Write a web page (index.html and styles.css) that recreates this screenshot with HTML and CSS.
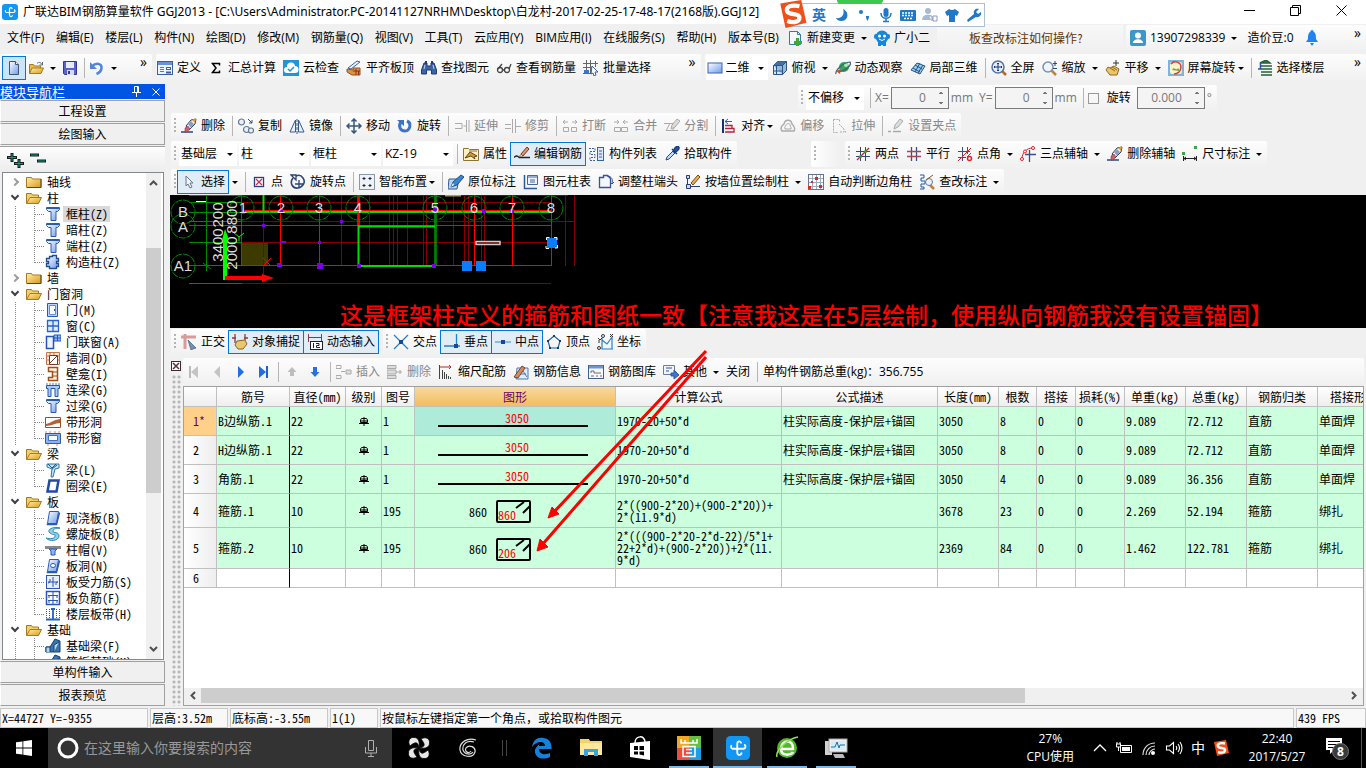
FILE: index.html
```html
<!DOCTYPE html>
<html lang="zh-CN">
<head>
<meta charset="utf-8">
<title>广联达BIM钢筋算量软件 GGJ2013</title>
<link rel="stylesheet" href="styles.css">
</head>
<body>
<svg class="defs" aria-hidden="true">
<defs>
<linearGradient id="gBlue" x1="0" y1="0" x2="1" y2="1"><stop offset="0" stop-color="#fff"/><stop offset="1" stop-color="#6d9cf0"/></linearGradient>
<linearGradient id="gGold" x1="0" y1="0" x2="1" y2="1"><stop offset="0" stop-color="#fff0a8"/><stop offset="1" stop-color="#d99a1c"/></linearGradient>
<symbol id="app" viewBox="0 0 16 16"><rect width="16" height="16" rx="3" fill="#1296f3"/><path d="M10 4.500C9.500 3 7.500 3.500 7.500 5v6c0 2 2.500 2 2.800.5M3.500 6.500C3 8 4 8.500 5 8.500h6.500C13 8.500 13.500 7 12.500 6" fill="none" stroke="#fff" stroke-width="1.200" stroke-linecap="round"/></symbol>
<symbol id="new" viewBox="0 0 16 16"><path d="M3.500 1.500h6l3 3v10h-9z" fill="url(#gBlue)" stroke="#44546c"/><path d="M9.500 1.500v3h3" fill="#fff" stroke="#44546c"/></symbol>
<symbol id="open" viewBox="0 0 16 16"><path d="M1.500 13.500v-9h4l1 1.500h6v2" fill="#e9bd4d" stroke="#a87a1c"/><path d="M1.500 13.500L4 8h11.500L13 13.500z" fill="url(#gGold)" stroke="#a87a1c"/><path d="M9 3.500c2-2 4-1 5 1M14.500 2v3h-3" fill="none" stroke="#5d6b82"/></symbol>
<symbol id="save" viewBox="0 0 16 16"><path d="M1.500 1.500h13v13h-12l-1-1z" fill="#5b62c8" stroke="#34388e"/><rect x="4" y="2" width="8" height="6" fill="#e7ebff"/><rect x="5" y="10" width="7" height="5" fill="#d6daf4"/><rect x="6" y="11" width="2" height="3" fill="#34388e"/></symbol>
<symbol id="undo" viewBox="0 0 16 16"><path d="M3 6.500C7 2 13 3.500 12.500 8c-.3 3-2.500 5-5 6" fill="none" stroke="#5485dd" stroke-width="2.500"/><path d="M1 2v7h7z" fill="#5485dd"/></symbol>
<symbol id="define" viewBox="0 0 16 16"><rect x=".5" y="1.500" width="15" height="13" fill="#eef4ff" stroke="#3b5f9f"/><rect x="1" y="2" width="14" height="3" fill="#6993d8"/><path d="M3 7.500h4M3 9.500h4M3 11.500h4" stroke="#777"/><rect x="9.500" y="7.500" width="4" height="2" fill="#fff" stroke="#3b5f9f"/><path d="M9 12.500h5" stroke="#3b5f9f" stroke-width="2"/></symbol>
<symbol id="sigma" viewBox="0 0 16 16"><path d="M11.500 5.500V3.500h-7L8 8l-3.500 4.500h7v-2" fill="none" stroke="#000" stroke-width="1.500"/></symbol>
<symbol id="cloud" viewBox="0 0 16 16"><rect width="16" height="16" fill="#1e96d8"/><path d="M4 13a3 3 0 0 1 0-6 4 4 0 0 1 8-1 3.500 3.500 0 0 1 0 7z" fill="#fff"/><path d="M5 9l2 2 4-4" fill="none" stroke="#1e96d8" stroke-width="1.500"/></symbol>
<symbol id="flat" viewBox="0 0 16 16"><path d="M2 8l9-7 3 1-9 7z" fill="#e6effc" stroke="#3c64a8"/><path d="M1 9l6 1v-2h7v7H6l-5-3z" fill="#dd9440" stroke="#98501c"/><path d="M7 11h7M10 9v6M12.500 11v4" stroke="#8e2e1c"/></symbol>
<symbol id="bino" viewBox="0 0 16 16"><path d="M3 3h3v3h4V3h3l2.500 7v4h-5v-4h-5v4h-5v-4z" fill="#3d64a4" stroke="#203d70"/><path d="M4 1h2v3H4zM10 1h2v3h-2z" fill="#203d70"/><path d="M3 9l1-4M12 5l1 4" stroke="#c2d6f6"/></symbol>
<symbol id="glasses" viewBox="0 0 16 16"><g fill="#fff" stroke="#444" stroke-width="1.300"><circle cx="4" cy="10" r="2.500"/><circle cx="11" cy="10" r="2.500"/><path d="M6.500 10h2M2 9l4-5M13 9l2-5" fill="none"/></g></symbol>
<symbol id="batch" viewBox="0 0 16 16"><path d="M3.500 0v14M7.500 0v14M0 3.500h15M0 7.500h9M0 13.500h8M12.500 1v6" stroke="#666"/><path d="M1 10h5v3H1z" fill="#3e74cf"/><path d="M9 6l6 6h-3l1 3-2 1-1-3-2 1z" fill="#fff" stroke="#3b5e92"/></symbol>
<symbol id="two" viewBox="0 0 16 16"><rect x="1" y="3" width="14" height="10" fill="url(#gBlue)" stroke="#3f63b2"/></symbol>
<symbol id="cube" viewBox="0 0 16 16"><path d="M1.500 5.500l4-4h9v9l-4 4h-9z" fill="#cfe5fa" stroke="#2c5486"/><path d="M1.500 5.500l4-4h9l-4 4z" fill="#45709d"/><path d="M10.500 5.500l4-4v9l-4 4zM1.500 5.500h9v9M4.500 6v8M2 11h8" fill="#6b9bc7" fill-opacity=".6" stroke="#2c5486"/></symbol>
<symbol id="orbit" viewBox="0 0 16 16"><circle cx="9" cy="7" r="5" fill="#35a55b"/><circle cx="11" cy="5" r="2" fill="#a9efb5"/><path d="M1 14c-1-3 6-11 14-12 2 3-4 9-12 10" fill="none" stroke="#3f6074" stroke-width="1.200"/><path d="M1 11l5-2-1 5z" fill="#d54b28"/></symbol>
<symbol id="local" viewBox="0 0 16 16"><path d="M1 10l6-7 8 3-5 8z" fill="#9bc9ec" stroke="#245887"/><path d="M5 5l7 4M3 8l7 4M10 3l-5 9M13 5l-5 8" stroke="#245887"/></symbol>
<symbol id="full" viewBox="0 0 16 16"><path d="M11 11l4 4" stroke="#b56d28" stroke-width="2.500"/><circle cx="7" cy="7" r="6" fill="#e3efff" stroke="#5b7198" stroke-width="1.500"/><path d="M7 3v8M3 7h8M6 4l1-1 1 1M6 10l1 1 1-1M4 6L3 7l1 1M10 6l1 1-1 1" fill="none" stroke="#1b377b"/></symbol>
<symbol id="zoomi" viewBox="0 0 16 16"><path d="M9 10l5 5" stroke="#bf8240" stroke-width="2.500"/><circle cx="6" cy="7" r="5" fill="#eef6ff" stroke="#7c90ac" stroke-width="1.500"/><path d="M13 1v5M11 3.500h4M11 8.500h4" stroke="#26487f"/></symbol>
<symbol id="pan" viewBox="0 0 16 16"><path d="M1 10l2-3 2 1 4-2 5 3-2 6H5z" fill="#ecc36b" stroke="#94691e"/><path d="M5 8l5 3M7 7l5 3" stroke="#94691e"/><path d="M11 0v6M8 3h6" stroke="#333"/></symbol>
<symbol id="rot3" viewBox="0 0 16 16"><rect width="16" height="16" fill="#7db4dc"/><rect x="2" y="2" width="12" height="12" rx="2" fill="#fbf3cf"/><path d="M3 4c3-4 10-2 10 3s-4 7-7 7" fill="none" stroke="#dc3d31" stroke-width="1.500"/><path d="M4 10c2-4 3 0 5-1s3 0 2 2z" fill="#6cae47"/></symbol>
<symbol id="floor" viewBox="0 0 16 16"><path d="M3 3h10l-4-3zM4 6h11M4 9h11M4 12h11M4 15h11" fill="#3a7c41" stroke="#23613d" stroke-width="1.400"/><path d="M3.500 3v6H1" stroke="#2b539c" fill="none" stroke-width="1.500"/></symbol>
<symbol id="erase" viewBox="0 0 16 16"><path d="M0 14h12" stroke="#2a4a80" stroke-width="1.500"/><path d="M5 8l5-6 5-1-1 5-6 6z" fill="#f6f6f6" stroke="#2b3c5c"/><path d="M7 6l3-3 3 3-3 4z" fill="#8b9dc0"/><path d="M11 2l4-2-1 5z" fill="#e59c2f"/><path d="M4 10l3-2 2 3-3 3H4z" fill="#d65b68" stroke="#633" stroke-width=".5"/></symbol>
<symbol id="copy" viewBox="0 0 16 16"><g fill="#eaf0f8" stroke="#637990" stroke-width="1.200"><circle cx="3.500" cy="4" r="3"/><circle cx="8.500" cy="11.500" r="3"/><circle cx="13" cy="12.500" r="2.500"/></g><path d="M10 1l4 4M14 2v3h-3" fill="none" stroke="#2a4c93"/></symbol>
<symbol id="mirror" viewBox="0 0 16 16"><path d="M6.500 2v12H1zM9.500 2v12H15z" fill="#e8f1ff" stroke="#385890"/><path d="M8 1v15" stroke="#385890" stroke-dasharray="3 1"/></symbol>
<symbol id="move" viewBox="0 0 16 16"><path d="M8 1v14M1 8h14M5.500 3.500L8 1l2.500 2.500M5.500 12.500L8 15l2.500-2.500M3.500 5.500L1 8l2.500 2.500M12.500 5.500L15 8l-2.500 2.500" fill="none" stroke="#39567c" stroke-width="1.500"/></symbol>
<symbol id="rotate" viewBox="0 0 16 16"><path d="M10 3c5 2 3 10-2 10S1 8 4 4" fill="none" stroke="#3d72cb" stroke-width="3"/><path d="M0 2h7v6z" fill="#3d72cb"/></symbol>
<symbol id="extend" viewBox="0 0 16 16"><path d="M1 5.500h7v5H1M9.500 8H13M12.500 2v12M15 2v12" fill="none" stroke="#aaa"/></symbol>
<symbol id="trim" viewBox="0 0 16 16"><path d="M0 6.500h6M0 10.500h6M7.500 1v14M10.500 1v14M11 8.500h5" fill="none" stroke="#aaa"/></symbol>
<symbol id="breaki" viewBox="0 0 16 16"><path d="M1 4h5M10 4h5M3 2L1 4l2 2M13 2l2 2-2 2M1.500 9.500h5v4h-5zM9.500 9.500h5v4h-5z" fill="none" stroke="#aaa"/></symbol>
<symbol id="joini" viewBox="0 0 16 16"><path d="M1 4h5M10 4h5M4 2l2 2-2 2M12 2l-2 2 2 2M1.500 9.500h6v4h-6zM8.500 9.500h6v4h-6z" fill="none" stroke="#aaa"/></symbol>
<symbol id="split" viewBox="0 0 16 16"><path d="M0 5.500h10M2 12.500h12M2 13l4-8M8 13l7-10" fill="none" stroke="#aaa"/><path d="M7 11l1-4 5-6 3 2-5 6z" fill="#ddd" stroke="#aaa"/></symbol>
<symbol id="gripset" viewBox="0 0 16 16"><path d="M0 13.500h3M5 13.500h8" stroke="#aaa" stroke-width="1.500"/><path d="M6 11l1-4 5-6 3 2-5 6z" fill="#ddd" stroke="#aaa"/></symbol>
<symbol id="align" viewBox="0 0 16 16"><path d="M2 1v14" stroke="#1a306d" stroke-width="2"/><path d="M4 3.500h7M7 1L4 3.500 7 6" stroke="#2360c3" fill="none"/><path d="M4 7.500h7v3H4M4 14h9v-3.500h-2" fill="none" stroke="#ae263c" stroke-width="1.300"/></symbol>
<symbol id="offset" viewBox="0 0 16 16"><path d="M2 13c-3-4 1-6 2-7 1-5 7-5 8 0 2 2 4 4 2 7z" fill="none" stroke="#aaa" stroke-width="1.400"/><path d="M5 11c-1-3 1-2 1-4 1-2 4-2 4 0s2 2 1 4z" fill="none" stroke="#aaa"/></symbol>
<symbol id="stretch" viewBox="0 0 16 16"><path d="M2.500 1.500h6v3M2.500 1.500v13h4M8 6l5 5v3h-4M14 13l1 1-1 1" fill="none" stroke="#aaa" stroke-dasharray="2 1"/></symbol>
<symbol id="prop" viewBox="0 0 16 16"><path d="M.5 2.500h5l1 1h9v11H.5z" fill="#fff1bf" stroke="#8e7339"/><path d="M2 12l5-6 7 4-3 1 1 2-4-3z" fill="#d49635" stroke="#5d4a23"/><path d="M6 5h8" stroke="#8e7339"/></symbol>
<symbol id="pencil" viewBox="0 0 16 16"><path d="M0 11.500q3-3 5 0h11" fill="none" stroke="#222" stroke-width="1.300"/><path d="M7 8l6-7 2 2-6 7z" fill="#e59362" stroke="#6d3828"/><path d="M5 11l2-3 2 2z" fill="#f7d6a7" stroke="#444" stroke-width=".5"/></symbol>
<symbol id="list" viewBox="0 0 16 16"><path d="M0 2.500h6v3H1v3h5v3H1v3h5" fill="none" stroke="#3763a7" stroke-dasharray="2 1"/><rect x="8.500" y="1.500" width="6" height="13" fill="#dce8fa" stroke="#3763a7"/><path d="M10 5h3M10 8h3M10 11h3" stroke="#3763a7"/></symbol>
<symbol id="pick" viewBox="0 0 16 16"><path d="M2 14l1-3 6-6 2 2-6 6z" fill="#bcdcff" stroke="#2a4b83"/><path d="M8 3l5 5M9 6l2-4c3-4 6 0 2 3l-3 2" fill="#2a57a5" stroke="#173b7b" stroke-width="1.500"/></symbol>
<symbol id="two-pt" viewBox="0 0 16 16"><path d="M1 5.500h14M1 10.500h14M5.500 1v14M10.500 1v14" stroke="#38476e"/><path d="M2 14L14 2" stroke="#bd2424" stroke-width="1.200"/><circle cx="5.500" cy="10.500" r="1.500" fill="#359b34"/><circle cx="10.500" cy="5.500" r="1.500" fill="#359b34"/></symbol>
<symbol id="grid" viewBox="0 0 16 16"><path d="M5.500 1v14M10.500 1v14" stroke="#38508b" stroke-width="1.300"/><path d="M1 5.500h14M1 10.500h14" stroke="#a64554" stroke-width="1.300"/></symbol>
<symbol id="angle" viewBox="0 0 16 16"><path d="M1 5.500h12M1 11.500h8M5.500 1v14M10.500 1v7" stroke="#38508b"/><path d="M1 15L14 2M10 11l4-4" stroke="#d22"/><circle cx="12.500" cy="12.500" r="2" fill="#fff" stroke="#d22" stroke-width="1.500"/></symbol>
<symbol id="three" viewBox="0 0 16 16"><path d="M5 8.500h11M9.500 4v12" stroke="#38508b" stroke-width="1.300"/><path d="M2 13C2 7 6 2 13 2" fill="none" stroke="#d22"/><circle cx="2" cy="13" r="1.500" fill="#fff" stroke="#d22"/><circle cx="5" cy="5.500" r="1.500" fill="#fff" stroke="#d22"/><circle cx="13" cy="2" r="1.500" fill="#fff" stroke="#d22"/></symbol>
<symbol id="dim" viewBox="0 0 16 16"><path d="M1.500 10v5M14.500 10v5M2 12.500h12M4 11l-2 1.500L4 14M12 11l2 1.500-2 1.500" fill="none" stroke="#222"/><path d="M0 6h3v3H0zM12 0h3v3h-3z" fill="#3da64a"/></symbol>
<symbol id="cursor" viewBox="0 0 16 16"><path d="M5 2l7 7H9l2 4-2 1-2-4-2 2z" fill="#eef5ff" stroke="#66798c"/></symbol>
<symbol id="point" viewBox="0 0 16 16"><rect x="3.500" y="3.500" width="9" height="9" fill="#fff" stroke="#283c80" stroke-width="1.300"/><path d="M5 5l6 6M11 5l-6 6" stroke="#c43152" stroke-width="1.300"/></symbol>
<symbol id="rotp" viewBox="0 0 16 16"><path d="M3 4c-4 5 0 11 5 10s8-6 5-10c-2-3-5-3-7-2" fill="none" stroke="#2c4675" stroke-width="1.600"/><path d="M1 1h5v5zM5 10h8M9 6v8" fill="none" stroke="#2c4675" stroke-width="1.300"/></symbol>
<symbol id="smart" viewBox="0 0 16 16"><rect x=".5" y=".5" width="15" height="15" fill="#eef2f6" stroke="#263b56" stroke-dasharray="1 1"/><path d="M5 3v3M3.500 4.500h3M11 3v3M9.500 4.500h3M5 10v3M3.500 11.500h3M11 10v3M9.500 11.500h3" stroke="#17233b"/></symbol>
<symbol id="orig" viewBox="0 0 16 16"><path d="M1 5h10l-2 10H0z" fill="#b8d5f5" stroke="#315785"/><path d="M3 13l2-5 8-7 3 2-7 8z" fill="#3c84d1" stroke="#244e83"/><path d="M3 13l3-2-1-2z" fill="#fff"/></symbol>
<symbol id="coltab" viewBox="0 0 16 16"><path d="M4.500 1.500h10v9h-10z" fill="#edf4ff" stroke="#46679a"/><path d="M5 3h9M7 6h5M7 8h5" stroke="#46679a"/><path d="M1.500 1v13.500H14" fill="none" stroke="#2e5a99" stroke-width="1.500"/></symbol>
<symbol id="adjust" viewBox="0 0 16 16"><path d="M1.500 3.500h4v-2h4l3 3v9h-11z" fill="#f3f7ff" stroke="#3b5390" stroke-width="1.300"/><path d="M9 2c5 0 6 4 5 8M12 8l2 2 2-2" fill="none" stroke="#3b5390"/></symbol>
<symbol id="wallc" viewBox="0 0 16 16"><path d="M1.500 1.500h3v3h-3zM2.500 5v5M1.500 10.500h4v4h-4zM6 12.500h9" fill="#cad9ee" stroke="#263f70"/><path d="M6 9l7-8 2 2-7 8z" fill="#edb14b" stroke="#6d4922"/></symbol>
<symbol id="auto" viewBox="0 0 16 16"><rect x=".5" y=".5" width="15" height="15" fill="#fff" stroke="#637391"/><path d="M4.500 1v14M8.500 1v14M12.500 1v14M1 4.500h14M1 8.500h14M1 12.500h14" stroke="#9caac0"/><path d="M7 3h3v3H7zM11 11h3v3h-3zM0 12h3v3H0zM3 7h2v2H3z" fill="#d42a2a"/></symbol>
<symbol id="check" viewBox="0 0 16 16"><path d="M1 1h4v3H2v3h4v3H2v3h3v2H1" fill="none" stroke="#2856a0"/><path d="M11 11l4 4" stroke="#bd8240" stroke-width="2.500"/><circle cx="10" cy="8" r="3.500" fill="#e8f3ff" stroke="#657a95"/><path d="M7 6l7-5" stroke="#815923"/></symbol>
<symbol id="ortho" viewBox="0 0 16 16"><path d="M0 3h15M4 0v15" stroke="#d99a9a" stroke-width="3"/><path d="M7 6l8 8-3 1-2 1z" fill="#7890ac" stroke="#425b7a" stroke-width=".7"/></symbol>
<symbol id="snap" viewBox="0 0 16 16"><path d="M0 4h4M12 4h4M3 0v9M13 0v6" stroke="#8c3945" stroke-width="1.300"/><path d="M3 11l2-4 8-1 2 4-4 5H6z" fill="#e9c76b" stroke="#896324"/></symbol>
<symbol id="dyn" viewBox="0 0 16 16"><path d="M1.500 0v8M14.500 0v8M2 3.500h12" stroke="#8b3945"/><rect x="3.500" y="7.500" width="12" height="8" fill="#fff" stroke="#222"/><path d="M6.500 9v5M9 9.500h3v2H9.500v2H13" stroke="#222" fill="none"/></symbol>
<symbol id="cross" viewBox="0 0 16 16"><path d="M1 1l14 14M15 1L1 15" stroke="#2680cf" stroke-width="1.300"/><path d="M6 6h4v4H6z" fill="#14489b"/></symbol>
<symbol id="perp" viewBox="0 0 16 16"><path d="M0 12h16M12.500 0v13" stroke="#2680cf" stroke-width="1.300"/><path d="M10 10h4v4h-4z" fill="#14489b"/></symbol>
<symbol id="mid" viewBox="0 0 16 16"><path d="M0 8h16" stroke="#6daae4" stroke-width="1.500"/><path d="M6 6h4v4H6z" fill="#14489b"/></symbol>
<symbol id="vertex" viewBox="0 0 16 16"><path d="M8 2L14 7l-2 7H4L2 7z" fill="none" stroke="#2164a5" stroke-width="1.200"/><path d="M7 1h2v2H7zM1 6h2v2H1zM13 6h2v2h-2zM3 13h2v2H3zM11 13h2v2h-2z" fill="#153e70"/></symbol>
<symbol id="coord" viewBox="0 0 16 16"><path d="M5 4v11h11M5 6l5 4 5-7v12" fill="none" stroke="#2680cf" stroke-width="1.200"/><path d="M1 4l2 2 2-2M2 6v3M13 0l3 3M16 0l-3 3" stroke="#333" fill="none"/><circle cx="6" cy="2" r="1.500" fill="none" stroke="#333"/><circle cx="2" cy="14" r="1.500" fill="none" stroke="#333"/></symbol>
<symbol id="first" viewBox="0 0 16 16"><path d="M4 2v12" stroke="#bbb" stroke-width="2"/><path d="M12 2v12L5 8z" fill="#c4c4c4"/></symbol>
<symbol id="prev" viewBox="0 0 16 16"><path d="M11 2v12L5 8z" fill="#c4c4c4"/></symbol>
<symbol id="next" viewBox="0 0 16 16"><path d="M6 2v12l6-6z" fill="#1f6ee2"/></symbol>
<symbol id="last" viewBox="0 0 16 16"><path d="M12 2v12" stroke="#1f5fd0" stroke-width="2"/><path d="M4 2v12l7-6z" fill="#1f6ee2"/></symbol>
<symbol id="up" viewBox="0 0 16 16"><path d="M8 3l4.500 5H10v4H6V8H3.500z" fill="#bdbdbd"/></symbol>
<symbol id="down" viewBox="0 0 16 16"><path d="M8 13l4.500-5H10V3H6v5H3.500z" fill="#2a6fe0"/></symbol>
<symbol id="ins" viewBox="0 0 16 16"><path d="M0 1.500h5v3H0zM0 11.500h5v3H0zM5 7.500h4" fill="none" stroke="#aaa"/><path d="M10 6h5v4h-5z" fill="#ddd" stroke="#aaa"/></symbol>
<symbol id="delr" viewBox="0 0 16 16"><path d="M0 1.500h9v3H0zM0 6h9v4H0zM0 11.500h9v3H0zM9 8h6M13 6v4" fill="#ddd" stroke="#aaa"/></symbol>
<symbol id="scale" viewBox="0 0 16 16"><path d="M2 3h11M11 1l2 2-2 2" stroke="#b3262f" fill="none"/><path d="M1.500 1v14M4.500 6v9M6.500 8v7M8.500 10v5M10.500 12v3M12.500 13v2" stroke="#444"/></symbol>
<symbol id="info" viewBox="0 0 16 16"><path d="M4 4h11v11H3z" fill="#e0eefc" stroke="#4d78ad"/><path d="M1 13L9 2l3 2-7 10z" fill="#d68b58" stroke="#68483d"/><path d="M8 10h5M10 7l4 6" stroke="#4d78ad"/></symbol>
<symbol id="lib" viewBox="0 0 16 16"><rect x=".5" y="1.500" width="15" height="13" fill="#f4f7fd" stroke="#425f8c"/><path d="M1 3h14" stroke="#6b97d4" stroke-width="3"/><path d="M3 9V7h3v2h7M3 12h3M8 12h2M12 12h2" fill="none" stroke="#786a57"/></symbol>
<symbol id="other" viewBox="0 0 16 16"><path d="M.5 1.500h11v9H.5z" fill="#eef4fc" stroke="#687d9a"/><path d="M3 4h6M3 7h3M8 9h3V6l5 5-5 4v-3H8z" fill="#3875d4" stroke="#3156a2"/></symbol>
<symbol id="newchg" viewBox="0 0 16 16"><path d="M2.500 1.500h8l3 3v10h-11z" fill="#f2fbff" stroke="#3c779e"/><path d="M10.500 1.500v3h3" fill="none" stroke="#3c779e"/><path d="M9 8h3v3h3v3h-3v2H9v-2H7v-3h2z" fill="#3daa32"/></symbol>
<symbol id="robot" viewBox="0 0 16 16"><circle cx="8" cy="7" r="6.500" fill="#1686dc"/><rect x="0" y="4" width="16" height="5" rx="2" fill="#1686dc"/><path d="M4 11h8v5H9v-1H7v1H4z" fill="#1686dc"/><circle cx="5.500" cy="6" r="1.500" fill="#fff"/><circle cx="10.500" cy="6" r="1.500" fill="#fff"/><path d="M5 9q3 3 6 0" stroke="#fff" fill="none"/></symbol>
<symbol id="user" viewBox="0 0 16 16"><rect width="16" height="16" rx="2" fill="#3d98c8"/><circle cx="8" cy="5.500" r="3" fill="#fff"/><path d="M3 13c0-5 10-5 10 0z" fill="#fff"/></symbol>
<symbol id="bell" viewBox="0 0 16 16"><path d="M8 0c1 0 1.500 1 1.500 1.500C12 3 12 6 12 9l2 3H2l2-3c0-3 0-6 2.500-7.500C6.500 1 7 0 8 0zM6 13h4l-2 3z" fill="#1f84ef"/></symbol>
<symbol id="folder" viewBox="0 0 16 16"><path d="M.5 13.500v-10h5l1 1.500h8.500v8.500z" fill="url(#gGold)" stroke="#a87a1c"/><path d="M15 5v8.500H1" fill="none" stroke="#5c451c"/></symbol>
<symbol id="folder2" viewBox="0 0 16 16"><path d="M.5 13.500v-10h5l1 1.500h6v3" fill="#f4d06b" stroke="#a87a1c"/><path d="M.5 13.500L4 7.500h11.500l-3 6z" fill="url(#gGold)" stroke="#a87a1c"/></symbol>
<symbol id="tcol" viewBox="0 0 16 16"><path d="M1.500 1.500h13v2l-2 2H11v9H6v-9H3.500l-2-2z" fill="url(#gBlue)" stroke="#2c5ca8"/><path d="M2 2.500h12" stroke="#2c5ca8"/></symbol>
<symbol id="tgz" viewBox="0 0 16 16"><path d="M4.500 2.500h3v-1h4v3h2v3h-2v2h2v3h-2v2h-7v-2h-3v-3h2v-2h-2v-3h3z" fill="url(#gBlue)" stroke="#234b8a" stroke-width="1.300"/></symbol>
<symbol id="tdoor" viewBox="0 0 16 16"><path d="M2.500 1.500h10v13h-10z" fill="#bcd7ff" stroke="#2656b4"/><path d="M4.500 3.500h6v9h-6z" fill="#fff" stroke="#5f8cdc"/><path d="M9 7h1v2H9z" fill="#2656b4"/></symbol>
<symbol id="twin" viewBox="0 0 16 16"><path d="M2.500 2.500h11v11h-11zM8 3v10M3 8h10" fill="#dfebff" stroke="#2864cc" stroke-width="1.300"/></symbol>
<symbol id="tdw" viewBox="0 0 16 16"><path d="M1.500 2.500h7v12h-7z" fill="#eef4ff" stroke="#2656b4" stroke-width="1.500"/><path d="M9 1h7v6H9zM12.500 1v6M9 4h7" fill="#8eb8ff" stroke="#2656b4"/></symbol>
<symbol id="tbrick" viewBox="0 0 16 16"><path d="M1.500 2.500h13v12h-13z" fill="#ffe8d8" stroke="#c2764b"/><path d="M1 6h3M1 10h3M12 6h3M12 10h3M5 2v3M9 2v3" stroke="#d66c3b"/><path d="M4.500 5.500h8v9h-8zM4 14l8-8" fill="#fff" stroke="#703a20"/></symbol>
<symbol id="tniche" viewBox="0 0 16 16"><path d="M3.500 1.500h9v13h-9v-3h4v-6h-4z" fill="#fff3df" stroke="#9c4d1c" stroke-width="1.500"/><path d="M8 6h4M8 10h4" stroke="#9c4d1c"/></symbol>
<symbol id="tbeam" viewBox="0 0 16 16"><path d="M1.500 3.500h13v3H13v8h-3v-8H6v8H3v-8H1.500z" fill="#a6cbff" stroke="#2857a7"/><path d="M1 2h14" stroke="#4d7bc0" stroke-dasharray="2 1"/></symbol>
<symbol id="tband" viewBox="0 0 16 16"><path d="M.5 3.500h15v10H.5z" fill="#fff" stroke="#9c4d1c"/><path d="M1 10c5-1 7-4 14-5v4c-5 0-8 3-14 3z" fill="#b1643c"/></symbol>
<symbol id="tband2" viewBox="0 0 16 16"><path d="M.5 3.500h15v10H.5z" fill="#8ab3f4" stroke="#325ba3"/><path d="M3.500 5.500h9v5h-9z" fill="#fff" stroke="#466fb8"/><path d="M1 1v2M5 1v2M10 1v2M14 1v2M3 14v2M12 14v2" stroke="#e58773"/></symbol>
<symbol id="tlb" viewBox="0 0 16 16"><path d="M2 2h12v4l-4 1-2 8H6l1-8-5-2z" fill="#c1e5f5" stroke="#3172a7"/><path d="M3 2l4 4 4-4M7 7l5-4" stroke="#1c578d" fill="none"/></symbol>
<symbol id="tslab" viewBox="0 0 16 16"><path d="M4.500 1.500h9l-2 12h-9z" fill="url(#gBlue)" stroke="#2c5ca8"/><path d="M2.500 13.500v1h9l3-12" fill="none" stroke="#2c5ca8" stroke-width="1.500"/></symbol>
<symbol id="tring" viewBox="0 0 16 16"><path d="M4.500 2.500h9l-2 11h-9z" fill="#fff" stroke="#2348a5" stroke-width="2.500"/></symbol>
<symbol id="thole" viewBox="0 0 16 16"><use href="#tslab"/><ellipse cx="8" cy="7.500" rx="2.500" ry="2" fill="#fff" stroke="#2856b3"/></symbol>
<symbol id="tspiral" viewBox="0 0 16 16"><path d="M15 2C8 0 1 4 5 7s5 0 5 3-5 3-9 2c3 4 13 3 13-2S8 8 8 5s4-2 7-3z" fill="#8bd2f0" stroke="#3488b5"/></symbol>
<symbol id="tcap" viewBox="0 0 16 16"><path d="M0 4h16v3H0z" fill="#888"/><path d="M4 7h8l-2 2v4H6V9z" fill="#8cb5ff" stroke="#2357b8"/></symbol>
<symbol id="trebar" viewBox="0 0 16 16"><rect x="1.500" y="1.500" width="13" height="13" fill="#e4eeff" stroke="#2856b3"/><path d="M3 8h10M8 3v10M5 5v2q0 2-2 2M11 11V9q0-1 2-1" fill="none" stroke="#2856b3"/></symbol>
<symbol id="tneg" viewBox="0 0 16 16"><rect x="1.500" y="1.500" width="13" height="13" fill="#fff" stroke="#2856b3" stroke-width="1.500"/><path d="M3 5.500h10M3 10.500h10M8 2v12M4 5v3M12 5v3M4 10v3M12 10v3" stroke="#2856b3"/></symbol>
<symbol id="tstrip" viewBox="0 0 16 16"><path d="M1.500 3v10M4.500 3v10M11.500 3v10M14.500 3v10" stroke="#555" stroke-dasharray="1 1"/><path d="M8 3v10M1 13.500h14M6 3h4" stroke="#2262c0" stroke-width="1.800"/></symbol>
<symbol id="tfb" viewBox="0 0 16 16"><path d="M1 9h4l5-8 5 2v11H1z" fill="#3975ae" stroke="#143f70"/><path d="M1 14V9h4v5M9 14V7l5-3" fill="#b4d7ef" stroke="#143f70"/></symbol>
<symbol id="sogou" viewBox="0 0 16 16"><path d="M1 2l12-2 3 13-12 3z" fill="#ef4f1b"/><path d="M12 3.500C7 2.500 4 4 5 6.500s7 .5 7 3.500-4 3-7 2" fill="none" stroke="#fff" stroke-width="2.400"/></symbol>
<symbol id="plus2" viewBox="0 0 26 16"><path d="M5 0v9M0 4.500h10M12 6v9M7 10.500h10" stroke="#102020" stroke-width="3"/><path d="M5 1v7M1 4.500h8M12 7v7M8 10.500h8" stroke="#169a80"/></symbol>
</defs>
</svg>

<header class="titlebar">
  <svg class="i"><use href="#app"/></svg>
  <h1>广联达BIM钢筋算量软件 GGJ2013 - [C:\Users\Administrator.PC-20141127NRHM\Desktop\白龙村-2017-02-25-17-48-17(2168版).GGJ12]</h1>
  <div class="ime">
    <span class="blob"></span>
    <svg class="ime-s"><use href="#sogou"/></svg>
    <b>英</b>
    <svg class="i" viewBox="0 0 16 16"><path d="M9 2c5 2 6 8 2 11-3 2-8 1-9-2 6 1 9-4 7-9z" fill="#1f78c8"/></svg>
    <svg class="i" viewBox="0 0 16 16"><circle cx="5" cy="5" r="2" fill="#1f78c8"/><path d="M10 9h3c0 3-1 4-2 5 0-2-1-2-1-5z" fill="#1f78c8"/></svg>
    <svg class="i" viewBox="0 0 16 16"><rect x="5.500" y="1" width="5" height="9" rx="2.500" fill="#1f78c8"/><path d="M3 6c0 7 10 7 10 0M8 11v3M5 14.500h6" fill="none" stroke="#1f78c8" stroke-width="1.500"/></svg>
    <svg class="i" viewBox="0 0 16 16"><rect x="0" y="3" width="16" height="11" rx="1" fill="#1f78c8"/><path d="M2 6h12M2 8.500h12M4 11.500h8" stroke="#fff" stroke-width="1.300" stroke-dasharray="2 1"/></svg>
    <svg class="i" viewBox="0 0 16 16"><circle cx="6" cy="4" r="3" fill="#aab9d2"/><path d="M0 13c0-7 11-7 11 0z" fill="#aab9d2"/><path d="M7 9h3v5M11 9h4v5h-4z" stroke="#8d9dbb" fill="#fff"/></svg>
    <svg class="i" viewBox="0 0 16 16"><path d="M5 2q3 2 6 0l4 3-2 4-2-1v7H5V8L3 9 1 5z" fill="#1f78c8"/></svg>
    <svg class="i" viewBox="0 0 16 16"><path d="M2 15l-1-2 7-6c-1-4 2-6 5-5l-3 3 2 2 3-2c1 3-2 6-5 5z" fill="#1f78c8"/></svg>
  </div>
  <div class="winbtns">
    <button aria-label="最小化"><svg width="11" height="11"><path d="M0 5.500h11" stroke="#000"/></svg></button>
    <button aria-label="还原"><svg width="11" height="11"><path d="M.5 2.500h8v8h-8zM2.500 2V.5h8v8H9" fill="none" stroke="#000"/></svg></button>
    <button aria-label="关闭"><svg width="11" height="11"><path d="M.5.5l10 10M10.500.5l-10 10" stroke="#000"/></svg></button>
  </div>
</header>

<nav class="menubar">
  <div class="menus">
    <button>文件(F)</button><button>编辑(E)</button><button>楼层(L)</button><button>构件(N)</button><button>绘图(D)</button><button>修改(M)</button><button>钢筋量(Q)</button><button>视图(V)</button><button>工具(T)</button><button>云应用(Y)</button><button>BIM应用(I)</button><button>在线服务(S)</button><button>帮助(H)</button><button>版本号(B)</button>
  </div>
  <div class="bar plain">
    <button class="t dd"><svg class="i"><use href="#newchg"/></svg>新建变更</button>
    <button class="t"><svg class="i"><use href="#robot"/></svg>广小二</button>
  </div>
  <a class="tip" href="#help">板查改标注如何操作?</a>
  <div class="bar account">
    <button class="t dd"><svg class="i"><use href="#user"/></svg>13907298339</button>
    <span>造价豆:0</span>
    <svg class="i"><use href="#bell"/></svg>
    <span class="more">»</span>
  </div>
</nav>

<div class="mainbars">
  <div class="bar files">
    <button class="t on" aria-label="新建"><svg class="i"><use href="#new"/></svg></button>
    <button class="t dd" aria-label="打开"><svg class="i"><use href="#open"/></svg></button>
    <button class="t" aria-label="保存"><svg class="i"><use href="#save"/></svg></button>
    <i class="sep"></i>
    <button class="t dd" aria-label="撤销"><svg class="i"><use href="#undo"/></svg></button>
    <span class="more">»</span>
  </div>
  <div class="bar calc">
    <button class="t"><svg class="i"><use href="#define"/></svg>定义</button>
    <button class="t"><svg class="i"><use href="#sigma"/></svg>汇总计算</button>
    <button class="t"><svg class="i"><use href="#cloud"/></svg>云检查</button>
    <button class="t"><svg class="i"><use href="#flat"/></svg>平齐板顶</button>
    <button class="t"><svg class="i"><use href="#bino"/></svg>查找图元</button>
    <button class="t"><svg class="i"><use href="#glasses"/></svg>查看钢筋量</button>
    <button class="t"><svg class="i"><use href="#batch"/></svg>批量选择</button>
    <span class="more">»</span>
  </div>
  <div class="bar view">
    <label class="combo dim2"><svg class="i"><use href="#two"/></svg><select aria-label="视图维度"><option>二维</option></select></label>
    <button class="t dd"><svg class="i"><use href="#cube"/></svg>俯视</button>
    <button class="t"><svg class="i"><use href="#orbit"/></svg>动态观察</button>
    <button class="t"><svg class="i"><use href="#local"/></svg>局部三维</button>
    <i class="sep"></i>
    <button class="t"><svg class="i"><use href="#full"/></svg>全屏</button>
    <button class="t dd"><svg class="i"><use href="#zoomi"/></svg>缩放</button>
    <button class="t dd"><svg class="i"><use href="#pan"/></svg>平移</button>
    <button class="t dd tight"><svg class="i"><use href="#rot3"/></svg>屏幕旋转</button>
    <i class="sep"></i>
    <button class="t"><svg class="i"><use href="#floor"/></svg>选择楼层</button>
    <span class="more">»</span>
  </div>
</div>

<div class="body">
<aside class="side">
  <div class="side-title"><span>模块导航栏</span>
    <svg width="9" height="11" viewBox="0 0 9 11"><path d="M2.500 6V.5h4V6M0 6.500h9M4.500 7v4M5.500 1v5" fill="none" stroke="#fff"/></svg>
    <svg width="8" height="8" viewBox="0 0 8 8"><path d="M.5.5l7 7M7.500.5l-7 7" stroke="#fff"/></svg>
  </div>
  <button class="nav">工程设置</button>
  <button class="nav">绘图输入</button>
  <div class="side-tools">
    <svg width="26" height="16"><use href="#plus2"/></svg>
    <svg width="17" height="11" viewBox="0 0 17 11"><path d="M0 2h9M7 8h9" stroke="#102020" stroke-width="3"/><path d="M1 2h7M8 8h7" stroke="#169a80"/></svg>
  </div>
  <div class="treebox">
    <ul class="tree">
      <li><p class="g shut"><svg class="i"><use href="#folder"/></svg>轴线</p></li>
      <li><p class="g"><svg class="i"><use href="#folder2"/></svg>柱</p>
        <ul>
          <li class="sel"><svg class="i"><use href="#tcol"/></svg><span>框柱(Z)</span></li>
          <li><svg class="i"><use href="#tcol"/></svg><span>暗柱(Z)</span></li>
          <li><svg class="i"><use href="#tcol"/></svg><span>端柱(Z)</span></li>
          <li><svg class="i"><use href="#tgz"/></svg><span>构造柱(Z)</span></li>
        </ul></li>
      <li><p class="g shut"><svg class="i"><use href="#folder"/></svg>墙</p></li>
      <li><p class="g"><svg class="i"><use href="#folder2"/></svg>门窗洞</p>
        <ul>
          <li><svg class="i"><use href="#tdoor"/></svg><span>门(M)</span></li>
          <li><svg class="i"><use href="#twin"/></svg><span>窗(C)</span></li>
          <li><svg class="i"><use href="#tdw"/></svg><span>门联窗(A)</span></li>
          <li><svg class="i"><use href="#tbrick"/></svg><span>墙洞(D)</span></li>
          <li><svg class="i"><use href="#tniche"/></svg><span>壁龛(I)</span></li>
          <li><svg class="i"><use href="#tbeam"/></svg><span>连梁(G)</span></li>
          <li><svg class="i"><use href="#tcol"/></svg><span>过梁(G)</span></li>
          <li><svg class="i"><use href="#tband"/></svg><span>带形洞</span></li>
          <li><svg class="i"><use href="#tband2"/></svg><span>带形窗</span></li>
        </ul></li>
      <li><p class="g"><svg class="i"><use href="#folder2"/></svg>梁</p>
        <ul>
          <li><svg class="i"><use href="#tlb"/></svg><span>梁(L)</span></li>
          <li><svg class="i"><use href="#tring"/></svg><span>圈梁(E)</span></li>
        </ul></li>
      <li><p class="g"><svg class="i"><use href="#folder2"/></svg>板</p>
        <ul>
          <li><svg class="i"><use href="#tslab"/></svg><span>现浇板(B)</span></li>
          <li><svg class="i"><use href="#tspiral"/></svg><span>螺旋板(B)</span></li>
          <li><svg class="i"><use href="#tcap"/></svg><span>柱帽(V)</span></li>
          <li><svg class="i"><use href="#thole"/></svg><span>板洞(N)</span></li>
          <li><svg class="i"><use href="#trebar"/></svg><span>板受力筋(S)</span></li>
          <li><svg class="i"><use href="#tneg"/></svg><span>板负筋(F)</span></li>
          <li><svg class="i"><use href="#tstrip"/></svg><span>楼层板带(H)</span></li>
        </ul></li>
      <li><p class="g"><svg class="i"><use href="#folder2"/></svg>基础</p>
        <ul>
          <li><svg class="i"><use href="#tfb"/></svg><span>基础梁(F)</span></li>
          <li><svg class="i"><use href="#tfb"/></svg><span>筏板基础(M)</span></li>
        </ul></li>
    </ul>
    <div class="vscroll">
      <svg width="9" height="6" viewBox="0 0 9 6"><path d="M1 5l3.500-3.500L8 5" fill="none" stroke="#505050" stroke-width="2"/></svg>
      <i class="vthumb"></i>
      <svg width="9" height="6" viewBox="0 0 9 6"><path d="M1 1l3.500 3.500L8 1" fill="none" stroke="#505050" stroke-width="2"/></svg>
    </div>
  </div>
  <button class="nav">单构件输入</button>
  <button class="nav">报表预览</button>
</aside>

<main>
  <div class="row">
    <div class="bar offsetbar">
      <i class="grip"></i>
      <label class="combo"><select aria-label="偏移方式"><option>不偏移</option></select></label>
      <i class="sep"></i>
      <label class="num">X=<span class="spin"><input value="0"></span>mm</label>
      <label class="num">Y=<span class="spin"><input value="0"></span>mm</label>
      <i class="sep"></i>
      <label class="chk"><input type="checkbox">旋转</label>
      <label class="num"><span class="spin wide"><input value="0.000" aria-label="旋转角度"></span>°</label>
    </div>
  </div>
  <div class="row">
    <div class="bar">
      <i class="grip"></i>
      <button class="t"><svg class="i"><use href="#erase"/></svg>删除</button><i class="sep"></i>
      <button class="t"><svg class="i"><use href="#copy"/></svg>复制</button>
      <button class="t"><svg class="i"><use href="#mirror"/></svg>镜像</button><i class="sep"></i>
      <button class="t"><svg class="i"><use href="#move"/></svg>移动</button>
      <button class="t"><svg class="i"><use href="#rotate"/></svg>旋转</button><i class="sep"></i>
      <button class="t off"><svg class="i"><use href="#extend"/></svg>延伸</button>
      <button class="t off"><svg class="i"><use href="#trim"/></svg>修剪</button><i class="sep"></i>
      <button class="t off"><svg class="i"><use href="#breaki"/></svg>打断</button>
      <button class="t off"><svg class="i"><use href="#joini"/></svg>合并</button>
      <button class="t off"><svg class="i"><use href="#split"/></svg>分割</button><i class="sep"></i>
      <button class="t dd tight"><svg class="i"><use href="#align"/></svg>对齐</button>
      <button class="t off"><svg class="i"><use href="#offset"/></svg>偏移</button>
      <button class="t off"><svg class="i"><use href="#stretch"/></svg>拉伸</button><i class="sep"></i>
      <button class="t off"><svg class="i"><use href="#gripset"/></svg>设置夹点</button>
    </div>
  </div>
  <div class="row">
    <div class="bar props">
      <i class="grip"></i>
      <div class="combos">
        <label class="combo c1"><select aria-label="楼层"><option>基础层</option></select></label>
        <label class="combo c2"><select aria-label="类别"><option>柱</option></select></label>
        <label class="combo c2"><select aria-label="类型"><option>框柱</option></select></label>
        <label class="combo c2"><select aria-label="构件"><option>KZ-19</option></select></label>
      </div>
      <i class="sep"></i>
      <button class="t"><svg class="i"><use href="#prop"/></svg>属性</button>
      <button class="t on"><svg class="i"><use href="#pencil"/></svg>编辑钢筋</button>
      <button class="t"><svg class="i"><use href="#list"/></svg>构件列表</button>
      <button class="t"><svg class="i"><use href="#pick"/></svg>拾取构件</button>
    </div>
    <div class="bar stub"><i class="grip"></i></div>
    <div class="bar">
      <i class="grip"></i>
      <button class="t"><svg class="i"><use href="#two-pt"/></svg>两点</button>
      <button class="t"><svg class="i"><use href="#grid"/></svg>平行</button>
      <button class="t dd"><svg class="i"><use href="#angle"/></svg>点角</button>
      <button class="t dd"><svg class="i"><use href="#three"/></svg>三点辅轴</button>
      <button class="t"><svg class="i"><use href="#erase"/></svg>删除辅轴</button>
      <button class="t dd"><svg class="i"><use href="#dim"/></svg>尺寸标注</button>
    </div>
  </div>
  <div class="row">
    <div class="bar">
      <i class="grip"></i>
      <button class="t on"><svg class="i"><use href="#cursor"/></svg>选择</button>
      <button class="t dd alone" aria-label="选择方式"></button><i class="sep"></i>
      <button class="t"><svg class="i"><use href="#point"/></svg>点</button>
      <button class="t"><svg class="i"><use href="#rotp"/></svg>旋转点</button><i class="sep"></i>
      <button class="t dd tight"><svg class="i"><use href="#smart"/></svg>智能布置</button><i class="sep"></i>
      <button class="t"><svg class="i"><use href="#orig"/></svg>原位标注</button>
      <button class="t"><svg class="i"><use href="#coltab"/></svg>图元柱表</button>
      <button class="t"><svg class="i"><use href="#adjust"/></svg>调整柱端头</button>
      <button class="t dd"><svg class="i"><use href="#wallc"/></svg>按墙位置绘制柱</button>
      <button class="t"><svg class="i"><use href="#auto"/></svg>自动判断边角柱</button>
      <button class="t dd"><svg class="i"><use href="#check"/></svg>查改标注</button>
    </div>
  </div>

  <svg class="canvas">
    <rect x="72" y="48" width="26" height="22" fill="#3d3a00"/>
    <path d="M72 .5h326M72 7.500h309M72 26.500h332M72 47.500h309M72 88.500h309M93.500 0v88M171.500 0v71M199.500 0v71M219.500 0v71M223.500 0v71M227.500 0v71M237.500 0v71M253.500 0v71M256.500 0v71M283.500 0v71M294.500 0v71M298.500 0v71M311.500 0v71M314.500 0v71M395.500 0v71M404.500 0v71" stroke="#850000" fill="none"/>
    <path d="M71.500 0v71M110.500 0v71M149.500 0v71M304.500 0v71M342.500 0v71M381.500 0v71M72 30.500h309M72 70.500h309M72 15.500h309" stroke="#f00" fill="none"/>
    <path d="M72 17h309M188.500 0v71M265.500 0v71M188 31.500h78M188 71h78M93.500 0v17" stroke="#0d0" stroke-width="2" fill="none"/>
    <path d="M188.500 0v30M265.500 0v71" stroke="#f00" fill="none"/>
    <g stroke="#008a00" fill="none">
      <path d="M19 .5h53M19 7.500h53M19 26.500h53M19 47.500h53M19 70.500h53M19 88.500h53M19 17.500h53M19 30.500h53M36.500 0v76M33 68l8 6"/>
      <g stroke-dasharray="7 1"><circle cx="13" cy="17" r="12"/><circle cx="13" cy="31" r="12"/><circle cx="13" cy="71" r="12"/>
      <circle cx="72" cy="13" r="12"/><circle cx="111" cy="13" r="12"/><circle cx="149" cy="13" r="12"/><circle cx="188" cy="13" r="12"/><circle cx="265" cy="13" r="12"/><circle cx="304" cy="13" r="12"/><circle cx="342" cy="13" r="12"/><circle cx="381" cy="13" r="12"/></g>
    </g>
    <g fill="#7a00e6"><path d="M71 15h4v4h-4zM109 14h4v4h-4zM147 68h6v6h-6zM107 68h5v4h-5zM110 46h6v2h-6zM187 69h4v4h-4zM262 69h4v4h-4zM263 12h4v4h-4zM312 14h4v4h-4zM340 14h4v4h-4zM92 29h3v3h-3zM170 25h3v3h-3zM148 46h3v3h-3z"/></g>
    <g class="axis">
      <text x="13" y="22">B</text><text x="13" y="37">A</text><text x="13" y="76">A1</text>
      <text x="73" y="18">1</text><text x="111" y="18">2</text><text x="149" y="18">3</text><text x="188" y="18">4</text><text x="265" y="18">5</text><text x="304" y="18">6</text><text x="342" y="18">7</text><text x="381" y="18">8</text>
      <text transform="translate(53 50) rotate(-90)">3400</text><text transform="translate(53 20) rotate(-90)">200</text>
      <text transform="translate(67 58) rotate(-90)">2000</text><text transform="translate(67 22) rotate(-90)">8800</text>
    </g>
    <path d="M306 46.500h24v3h-24z" fill="#600" stroke="#ccc" stroke-width="1.500"/>
    <path d="M377 43h10v10h-10zM292 66h10v10h-10zM306 66h10v10h-10z" fill="#0a7cff"/>
    <path d="M376.500 45v-2.500h3M384 42.500h3V45M387.500 50v3H385M379 53.500h-3V51" fill="none" stroke="#fff"/>
    <path d="M275 .5h16" stroke="#b99b43" stroke-width="2"/><path d="M26 6.500h10" stroke="#fff"/>
    <path d="M55 85V42" stroke="#0f0" stroke-width="4"/><path d="M52 45l3-11 4 11z" fill="#0f0"/>
    <path d="M55 83h41" stroke="#f00" stroke-width="4"/><path d="M92 79l12 4-12 4z" fill="#f00"/>
    <path d="M64 38l5 4 5-4M69 42v4" stroke="#0f0" fill="none"/><path d="M93 63l8 8M101 63l-8 8" stroke="#f00"/>
    <text class="note" x="170" y="129">这是框架柱定义的箍筋和图纸一致【注意我这是在5层绘制，使用纵向钢筋我没有设置锚固】</text>
  </svg>

  <div class="lower">
  <div class="row">
    <div class="bar">
      <i class="grip"></i>
      <button class="t"><svg class="i"><use href="#ortho"/></svg>正交</button>
      <button class="t on"><svg class="i"><use href="#snap"/></svg>对象捕捉</button>
      <button class="t on"><svg class="i"><use href="#dyn"/></svg>动态输入</button>
    </div>
    <div class="bar">
      <i class="grip"></i>
      <button class="t"><svg class="i"><use href="#cross"/></svg>交点</button>
      <button class="t on"><svg class="i"><use href="#perp"/></svg>垂点</button>
      <button class="t on"><svg class="i"><use href="#mid"/></svg>中点</button>
      <button class="t"><svg class="i"><use href="#vertex"/></svg>顶点</button>
      <button class="t"><svg class="i"><use href="#coord"/></svg>坐标</button>
    </div>
  </div>
  <section class="dock">
    <div class="strip">
      <svg width="10" height="10" viewBox="0 0 10 10"><rect x=".5" y=".5" width="9" height="9" fill="#fff" stroke="#3a2a3a"/><path d="M2 2l6 6M8 2L2 8" stroke="#533" stroke-width="1.500"/></svg>
      <i></i>
    </div>
    <div class="editor">
      <div class="bar edtools">
        <button class="t off" aria-label="首行"><svg class="i"><use href="#first"/></svg></button>
        <button class="t off" aria-label="上一行"><svg class="i"><use href="#prev"/></svg></button>
        <button class="t" aria-label="下一行"><svg class="i"><use href="#next"/></svg></button>
        <button class="t" aria-label="末行"><svg class="i"><use href="#last"/></svg></button><i class="sep"></i>
        <button class="t off" aria-label="上移"><svg class="i"><use href="#up"/></svg></button>
        <button class="t" aria-label="下移"><svg class="i"><use href="#down"/></svg></button><i class="sep"></i>
        <button class="t off"><svg class="i"><use href="#ins"/></svg>插入</button>
        <button class="t off"><svg class="i"><use href="#delr"/></svg>删除</button>
        <button class="t"><svg class="i"><use href="#scale"/></svg>缩尺配筋</button>
        <button class="t"><svg class="i"><use href="#info"/></svg>钢筋信息</button>
        <button class="t"><svg class="i"><use href="#lib"/></svg>钢筋图库</button>
        <button class="t dd"><svg class="i"><use href="#other"/></svg>其他</button>
        <button class="t">关闭</button><i class="sep"></i>
        <span>单构件钢筋总重(kg)：356.755</span>
      </div>
      <div class="gridbox">
      <table>
        <colgroup><col style="width:33px"><col style="width:73px"><col style="width:56px"><col style="width:36px"><col style="width:33px"><col style="width:201px"><col style="width:166px"><col style="width:156px"><col style="width:61px"><col style="width:38px"><col style="width:39px"><col style="width:49px"><col style="width:61px"><col style="width:61px"><col style="width:71px"><col style="width:73px"></colgroup>
        <thead><tr><th></th><th>筋号</th><th>直径(mm)</th><th>级别</th><th>图号</th><th class="hot">图形</th><th>计算公式</th><th>公式描述</th><th>长度(mm)</th><th>根数</th><th>搭接</th><th>损耗(%)</th><th>单重(kg)</th><th>总重(kg)</th><th>钢筋归类</th><th>搭接形式</th></tr></thead>
        <tbody>
        <tr class="r1"><th class="cur">1*</th><td>B边纵筋.1</td><td>22</td><td class="lv"><svg viewBox="0 0 10 9"><path d="M1.500 3v2.500h7V3l-1-1.500h-5zM5 0v9M0 6.500h10M1.500 4h7" fill="none" stroke="#000"/></svg></td><td>1</td><td class="fig pick"><svg viewBox="0 0 150 28"><path d="M0 19h150" stroke="#000" stroke-width="2"/><text x="79" y="16">3050</text></svg></td><td>1970-20+50*d</td><td>柱实际高度-保护层+锚固</td><td>3050</td><td>8</td><td>0</td><td>0</td><td>9.089</td><td>72.712</td><td>直筋</td><td>单面焊</td></tr>
        <tr class="r1"><th>2</th><td>H边纵筋.1</td><td>22</td><td class="lv"><svg viewBox="0 0 10 9"><path d="M1.500 3v2.500h7V3l-1-1.500h-5zM5 0v9M0 6.500h10M1.500 4h7" fill="none" stroke="#000"/></svg></td><td>1</td><td class="fig"><svg viewBox="0 0 150 28"><path d="M0 19h150" stroke="#000" stroke-width="2"/><text x="79" y="16">3050</text></svg></td><td>1970-20+50*d</td><td>柱实际高度-保护层+锚固</td><td>3050</td><td>8</td><td>0</td><td>0</td><td>9.089</td><td>72.712</td><td>直筋</td><td>单面焊</td></tr>
        <tr class="r1"><th>3</th><td>角筋.1</td><td>22</td><td class="lv"><svg viewBox="0 0 10 9"><path d="M1.500 3v2.500h7V3l-1-1.500h-5zM5 0v9M0 6.500h10M1.500 4h7" fill="none" stroke="#000"/></svg></td><td>1</td><td class="fig"><svg viewBox="0 0 150 28"><path d="M0 19h150" stroke="#000" stroke-width="2"/><text x="79" y="16">3050</text></svg></td><td>1970-20+50*d</td><td>柱实际高度-保护层+锚固</td><td>3050</td><td>4</td><td>0</td><td>0</td><td>9.089</td><td>36.356</td><td>直筋</td><td>单面焊</td></tr>
        <tr class="r2"><th>4</th><td>箍筋.1</td><td>10</td><td class="lv"><svg viewBox="0 0 10 9"><path d="M1.500 3v2.500h7V3l-1-1.500h-5zM5 0v9M0 6.500h10M1.500 4h7" fill="none" stroke="#000"/></svg></td><td>195</td><td class="fig"><svg viewBox="0 0 150 28"><rect x="60" y="4" width="33" height="21" fill="none" stroke="#000" stroke-width="2" rx="1"/><path d="M79 11l8-6M86 16l7-7" stroke="#000" stroke-width="2"/><text class="k" x="41" y="20">860</text><text x="70" y="23">860</text></svg></td><td>2*((900-2*20)+(900-2*20))+<br>2*(11.9*d)</td><td></td><td>3678</td><td>23</td><td>0</td><td>0</td><td>2.269</td><td>52.194</td><td>箍筋</td><td>绑扎</td></tr>
        <tr class="r3"><th>5</th><td>箍筋.2</td><td>10</td><td class="lv"><svg viewBox="0 0 10 9"><path d="M1.500 3v2.500h7V3l-1-1.500h-5zM5 0v9M0 6.500h10M1.500 4h7" fill="none" stroke="#000"/></svg></td><td>195</td><td class="fig"><svg viewBox="0 0 150 28"><rect x="60" y="5" width="33" height="21" fill="none" stroke="#000" stroke-width="2" rx="1"/><path d="M79 12l8-6M86 17l7-7" stroke="#000" stroke-width="2"/><text class="k" x="41" y="20">860</text><text x="70" y="24">206</text></svg></td><td>2*(((900-2*20-2*d-22)/5*1+<br>22+2*d)+(900-2*20))+2*(11.<br>9*d)</td><td></td><td>2369</td><td>84</td><td>0</td><td>0</td><td>1.462</td><td>122.781</td><td>箍筋</td><td>绑扎</td></tr>
        <tr class="r4"><th>6</th><td></td><td></td><td></td><td></td><td></td><td></td><td></td><td></td><td></td><td></td><td></td><td></td><td></td><td></td><td></td></tr>
        </tbody>
      </table>
      </div>
      <div class="hscroll">
        <svg width="6" height="9" viewBox="0 0 6 9"><path d="M5 1L1.500 4.500 5 8" fill="none" stroke="#505050" stroke-width="2"/></svg>
        <i class="track"><i class="hthumb"></i></i>
        <svg width="6" height="9" viewBox="0 0 6 9"><path d="M1 1l3.500 3.500L1 8" fill="none" stroke="#505050" stroke-width="2"/></svg>
      </div>
    </div>
  </section>
  <svg class="arrows" width="560" height="230"><g fill="#f00" stroke="#f00"><path d="M540 23L387 185M540 29L376 217" stroke-width="3"/><path d="M382 190l4-11 7 7zM371 223l3-12 8 8z"/></g></svg>
  </div>
</main>
</div>

<footer class="status">
  <span class="s1">X=44727 Y=-9355</span><span class="s2">层高:3.52m</span><span class="s3">底标高:-3.55m</span><span class="s4">1(1)</span><span class="s5">按鼠标左键指定第一个角点，或拾取构件图元</span><span class="s6">439 FPS</span>
</footer>

<div class="taskbar">
  <button class="start" aria-label="开始"><svg width="16" height="16" viewBox="0 0 16 16"><path d="M0 2.300L6.500 1.400v6.100H0zM7.300 1.300L16 0v7.500H7.300zM0 8.400h6.500v6.200L0 13.700zM7.300 8.400H16V16l-8.700-1.300z" fill="#fff"/></svg></button>
  <label class="search">
    <svg width="22" height="22"><circle cx="11" cy="11" r="9" fill="none" stroke="#fff" stroke-width="3"/></svg>
    <input placeholder="在这里输入你要搜索的内容" aria-label="搜索">
    <svg width="12" height="17"><path d="M3.500.5h5v10h-5zM.5 7v6h11V7M6 13v3.500M3 16.500h6" fill="none" stroke="#b0b0b0"/></svg>
  </label>
  <div class="apps">
    <button aria-label="风车"><svg width="22" height="22" viewBox="0 0 22 22"><g fill="#e8e8e8" stroke="#000" stroke-width=".8"><path id="petal" d="M11 11C10 4 7 5 2 9-1 4 2 0 6 .500c4 0 6 3 5 10.500z"/><use href="#petal" transform="rotate(90 11 11)"/><use href="#petal" transform="rotate(180 11 11)"/><use href="#petal" transform="rotate(270 11 11)"/></g></svg></button>
    <button aria-label="漩涡"><svg width="20" height="20" viewBox="0 0 20 20"><path d="M18 2C10-1 1 4 2 12c1 7 13 9 15 2 1-5-6-8-9-4-2 4 3 6 5 3M16 4C9 2 4 6 5 12c2 5 8 5 10 2" fill="none" stroke="#ddd" stroke-width="1.200"/></svg></button>
    <i class="tsep"></i>
    <button aria-label="Edge"><svg width="22" height="22" viewBox="0 0 22 22"><path d="M1 10C2 3 7 0 12 1c6 0 9 5 8.500 11H8c0 6 7 6 11 4v4C11 24 3 20 4 13c1-3 3-5 5-6-1 1-1 2-1 2h6c0-6-9-5-13 1z" fill="#1581dd"/></svg></button>
    <button aria-label="文件资源管理器"><svg width="22" height="20" viewBox="0 0 22 20"><path d="M0 1h9l1 2h12v14H0z" fill="#f5d26c"/><path d="M0 5h22v12H0z" fill="#ffe79c"/><path d="M4 18v-7h14v7h-4v-4H8v4z" fill="#32a5e4"/></svg></button>
    <button aria-label="商店"><svg width="22" height="24" viewBox="0 0 22 24"><path d="M1 7l20-2v19L1 21z" fill="#fff"/><path d="M6 7c0-8 10-8 10-1" fill="none" stroke="#fff" stroke-width="1.500"/><path d="M5 10h4v4H5zM10.500 10H15v4h-4.500zM5 15.500h4v3H5zM10.500 15.500H15v4l-4.500-1z" fill="#000"/></svg></button>
    <button class="run" aria-label="土建"><svg width="24" height="24" viewBox="0 0 24 24"><path d="M0 0h12v12H0z" fill="#f2a725"/><path d="M12 0h12v12H12z" fill="#67bd45"/><path d="M0 12h12v12H0z" fill="#e84f3e"/><path d="M12 12h12v12H12z" fill="#1f9de4"/><path d="M4 3v4h16V3M8 4v3M16 4v3M6 10.500h12v10H6zM9 13.500h6M9 17h6" fill="none" stroke="#fff" stroke-width="1.500"/></svg></button>
    <button class="run cur" aria-label="钢筋"><svg width="24" height="24"><use href="#app"/></svg></button>
    <button class="run" aria-label="浏览器"><svg width="24" height="24" viewBox="0 0 24 24"><circle cx="12" cy="12" r="10" fill="#4fb92c"/><path d="M6 13h12c1-10-12-10-12 0 0 8 11 6 12 3" fill="none" stroke="#fff" stroke-width="2.500"/><path d="M2 21C0 15 12 3 23 1" fill="none" stroke="#93dd54" stroke-width="1.500"/></svg></button>
    <button class="run" aria-label="资源监视器"><svg width="24" height="22" viewBox="0 0 24 22"><rect x="1" y="4" width="7" height="14" fill="#d0d0d0"/><rect x="5" y="2" width="18" height="13" fill="#eee" stroke="#aaa"/><path d="M7 4h14v9H7z" fill="#d7eaf8"/><path d="M7 10h4l2-5 2 6 1-3h5" fill="none" stroke="#1772a7"/><path d="M9 17h10l2 4H11z" fill="#bbb"/></svg></button>
  </div>
  <div class="cpu"><span>27%</span><span>CPU使用</span></div>
  <div class="tray">
    <svg width="14" height="16"><path d="M1 11l6-6 6 6" fill="none" stroke="#fff" stroke-width="1.300"/></svg>
    <svg width="18" height="16"><path d="M5.500 5.500h11v7h-11zM1 4h5M2 2v2M5 2v2M1.500 4v3h4V4M3.500 7v4" fill="none" stroke="#fff"/><path d="M7 7h8v4H7z" fill="#fff"/></svg>
    <svg width="16" height="16"><path d="M2 15C2 8 7 3 14 3M5 15c0-5 4-9 9-9M8 15c0-3 3-6 6-6" fill="none" stroke="#ddd" stroke-width="1.200"/><circle cx="12" cy="13" r="2" fill="#fff"/></svg>
    <svg width="18" height="16"><path d="M1.500 6v4h3l4 3.500v-11L4.500 6zM11 6q1.500 2 0 4M13 4q3 4 0 8M15 2q4 6 0 12" fill="none" stroke="#fff" stroke-width="1.100"/></svg>
    <span class="zh">中</span>
    <svg width="16" height="16"><use href="#sogou"/></svg>
  </div>
  <div class="clock"><span>22:40</span><span>2017/5/27</span></div>
  <div class="notes"><svg width="24" height="24"><path d="M1 2h16v12H9l-4 4v-4H1z" fill="#fff"/><path d="M3 5.500h12M3 8.500h12M3 11.500h8" stroke="#000"/><circle cx="15.500" cy="15.500" r="8" fill="#3a3a3a" stroke="#777"/><text x="15.500" y="20">8</text></svg></div>
  <i class="peek"></i>
</div>
</body>
</html>
```
FILE: styles.css
```css
*, *::before, *::after { box-sizing: border-box; }
html, body { height: 100%; margin: 0; }
body {
  display: flex; flex-direction: column; overflow: hidden;
  background: #f0f0f0; color: #000;
  font: 12px/16px "Open Sans", "Noto Sans CJK SC", sans-serif;
}
button, input, select { font: inherit; color: inherit; border: 0; background: none; padding: 0; margin: 0; border-radius: 0; white-space: nowrap; }
ul, p, h1 { margin: 0; padding: 0; list-style: none; }
svg { display: block; flex: none; }
.defs { position: absolute; width: 0; height: 0; }
.i { width: 16px; height: 16px; }

/* title bar */
.titlebar { display: flex; align-items: center; height: 24px; background: #fff; padding-left: 2px; gap: 5px; position: relative; flex: none; }
.titlebar h1 { font: 400 12px/20px "Noto Sans", "Noto Sans CJK SC", sans-serif; white-space: nowrap; flex: 1; min-width: 0; overflow: hidden; }
.winbtns { display: flex; margin-bottom: 3px; }
.winbtns button { width: 46px; display: flex; justify-content: center; }
.winbtns button:last-child { margin-right: 2px; }
.ime { position: absolute; left: 785px; top: 3px; height: 24px; width: 200px; background: #fff; border: 1px solid #aebfd4; display: flex; align-items: center; gap: 6px; padding-left: 26px; z-index: 3; }
.ime b { color: #1f78c8; font-size: 14px; width: 16px; }
.ime-s { position: absolute; left: -8px; top: -4px; width: 29px; height: 28px; }
.blob { position: absolute; left: 51px; top: -4px; width: 46px; height: 4px; background: #3fc84f; border-radius: 0 0 4px 4px; }

/* bars */
.bar { display: flex; align-items: center; gap: 7px; height: 26px; padding: 0 5px 0 3px; background: linear-gradient(#fdfdfd, #f0f0f0); border-radius: 2px; white-space: nowrap; }
.row { display: flex; align-items: center; height: 28px; gap: 3px; padding-left: 5px; flex: none; }
.t { display: flex; align-items: center; gap: 4px; height: 24px; }
.on { background: #e0ecf6; border: 1px solid #0078d7; padding: 0 3px; margin: 0 -4px; }
.off { color: #888; }
.dd::after, .combo::after { content: ""; border: 3px solid transparent; border-top-color: #000; border-bottom: 0; margin-left: 2px; }
.tight::after { margin-left: -2px; }
.alone::after { margin-left: 0; }
.sep { width: 1px; height: 20px; background: #b5b5b5; margin-right: -2px; flex: none; }
.grip { width: 2px; height: 16px; margin-right: -2px; flex: none; background: repeating-linear-gradient(#b4b4b4 0 2px, transparent 2px 4px); }
.more { align-self: flex-start; margin-left: auto; padding-top: 2px; font-size: 14px; line-height: 12px; }
.combo { display: flex; align-items: center; background: #fff; height: 24px; padding: 0 4px 0 2px; }
.combo select { appearance: none; flex: 1; min-width: 0; }

.menubar { display: flex; align-items: center; height: 28px; flex: none; }
.menus { display: flex; justify-content: space-between; padding-left: 7px; width: 779px; }
.plain { background: none; gap: 7px; padding: 0 7px 0 8px; }
.tip { flex: 1; height: 26px; line-height: 26px; padding-left: 32px; color: #663300; text-decoration: none; background: linear-gradient(#f8f8f8, #f0f0f0); font-family: "Noto Sans Mono CJK SC", "Noto Sans CJK SC", sans-serif; }
.account { width: 240px; margin-left: 3px; padding-left: 4px; gap: 10px; }

.mainbars { display: flex; gap: 4px; height: 32px; padding-top: 2px; flex: none; }
.mainbars .bar { height: 28px; }
.files { width: 152px; gap: 6px; padding-left: 6px; }
.files .on { background: #cce4f7; }
.calc { flex: 1 1 544px; padding-left: 1px; }
.view { flex: 1 1 661px; padding-left: 1px; }
.dim2 { width: 62px; gap: 3px; padding-left: 1px; margin-right: -3px; }

.body { display: flex; flex: 1; min-height: 0; }

/* side panel */
.side { width: 166px; display: flex; flex-direction: column; flex: none; padding-right: 1px; }
.side, .status, table, .fig text { font-family: "Noto Sans Mono CJK SC", "Noto Sans CJK SC", monospace; }
.side-title { display: flex; align-items: center; gap: 11px; height: 15px; background: #0054e3; color: #fff; padding-right: 5px; flex: none; }
.side-title span { flex: 1; font-size: 13px; line-height: 15px; }
.nav { height: 22px; border: 1px solid #a0a0a0; border-left-color: #fff; margin-top: 1px; flex: none; background: #f0f0f0; }
.side-tools { display: flex; gap: 4px; padding: 6px 7px 0; height: 26px; flex: none; border-top: 1px solid #a0a0a0; background: linear-gradient(#fdfdfd, #ececec); margin-top: 1px; }
.side-tools svg:first-child { margin-right: -7px; }
.treebox { flex: 1; min-height: 0; display: flex; background: #fff; border: 1px solid #828790; margin: 0 1px 0 2px; }
.tree { flex: 1; overflow: hidden; padding-top: 1px; white-space: nowrap; }
.g { display: flex; align-items: center; gap: 5px; height: 16px; padding-left: 8px; line-height: 16px; }
.g::before { content: ""; width: 6px; height: 6px; border: solid #404040; border-width: 0 2px 2px 0; transform: rotate(45deg); margin: -4px 3px 0 1px; }
.g.shut::before { border-color: #a0a0a0; transform: rotate(-45deg); margin: 0 3px 0 1px; }
.tree ul { background: repeating-linear-gradient(#888 0 1px, transparent 1px 2px) 12px 0 / 1px 100% no-repeat, repeating-linear-gradient(#888 0 1px, transparent 1px 2px) 31px 0 / 1px calc(100% - 7px) no-repeat; }
.tree ul li { display: flex; align-items: center; height: 16px; padding-left: 42px; gap: 2px; background: repeating-linear-gradient(90deg, #888 0 1px, transparent 1px 2px) 32px 8px / 10px 1px no-repeat; }
.tree ul span { padding: 0 2px 0 3px; line-height: 16px; }
.sel span { background: #d9d9d9; }
.vscroll { width: 15px; margin-right: 2px; background: #f0f0f0; display: flex; flex-direction: column; align-items: center; padding: 7px 0; }
.vthumb { width: 15px; background: #cdcdcd; flex: 0 0 52%; margin-bottom: auto; }
.vscroll svg:first-child { margin-bottom: 62px; }

/* workspace */
main { flex: 1; min-width: 0; display: flex; flex-direction: column; }
.offsetbar { margin-left: 627px; color: #777; gap: 6px; }
.offsetbar .combo { color: #000; width: 58px; margin-left: -1px; }
.num { display: flex; align-items: center; gap: 2px; }
.spin { display: flex; align-items: center; width: 58px; height: 22px; border: 1px solid #7a7a7a; padding-right: 4px; background: #f4f4f4; }
.spin.wide { width: 68px; }
.spin input { width: 100%; min-width: 0; text-align: right; padding-right: 12px; }
.spin::after { content: ""; width: 6px; height: 14px; flex: none; background: linear-gradient(#777, #777) 2px 1px / 2px 1px no-repeat, linear-gradient(#777, #777) 1px 2px / 4px 1px no-repeat, linear-gradient(#777, #777) 1px 11px / 4px 1px no-repeat, linear-gradient(#777, #777) 2px 12px / 2px 1px no-repeat; }
.chk { display: flex; align-items: center; gap: 8px; color: #000; }
.chk input { appearance: none; width: 11px; height: 11px; border: 1px solid #999; }
.combos { display: flex; gap: 2px; margin: 0 -3px 0 -2px; }
.c1 { width: 58px; }
.c2 { width: 70px; }
.stub { width: 29px; margin-left: 71px; margin-right: 2px; background: linear-gradient(90deg, #fff, #f0f0f0); }
.canvas { height: 133px; width: calc(100% - 4px); margin: -1px 0 0 4px; background: #000; }
.axis { fill: #ddd; font: 15px "Liberation Sans", sans-serif; text-anchor: middle; }
.note { fill: #f00; font: 500 23px "Noto Sans CJK SC", sans-serif; }
.lower { position: relative; flex: 1; min-height: 0; display: flex; flex-direction: column; }
.arrows { position: absolute; left: 0; top: 0; pointer-events: none; }
.dock { flex: 1; min-height: 0; display: flex; padding: 2px 2px 0 4px; }
.strip { width: 13px; display: flex; flex-direction: column; gap: 4px; padding: 3px 1px 0; }
.strip i { flex: 1; width: 9px; margin-left: 1px; background: radial-gradient(circle at 2px 2px, #b8b8b8 1px, transparent 2px) 0 0 / 5px 5px; }
.editor { flex: 1; min-width: 0; display: flex; flex-direction: column; }
.edtools { height: 28px; flex: none; }
.gridbox { flex: 1; min-height: 0; overflow: hidden; background: #fff; border: solid #a0a0a0; border-width: 1px 1px 0 1px; }
table { border-collapse: separate; border-spacing: 0; table-layout: fixed; width: 1207px; line-height: 12px; }
th, td { border: solid #c0c0c0; border-width: 0 1px 1px 0; padding: 0 0 0 1px; text-align: left; font-weight: 400; white-space: nowrap; overflow: hidden; }
thead th { height: 20px; text-align: center; padding: 0; background: linear-gradient(#fff, #eee); }
thead .hot { background: linear-gradient(#f8d9a0, #f2bd5c); color: #606; }
tbody th { text-align: center; padding: 0 8px 0 0; background: linear-gradient(90deg, #fff, #eee); }
tbody .cur { background: #ffd08a; color: #606; padding-right: 2px; }
tbody td { background: #ccffdd; }
tbody td:nth-child(2) { border-right-color: #000; }
.r1 { height: 29px; }
.r2 { height: 34px; }
.r3 { height: 41px; }
.r4 { height: 19px; }
.r4 td { background: #fff; }
.lv svg { width: 10px; height: 9px; margin: 0 auto; }
.fig { padding: 0; }
.fig svg { width: 150px; height: 28px; margin: 0 0 0 23px; }
.fig text { font-size: 12px; fill: #f00; text-anchor: middle; }
.fig .k { fill: #000; }
.r3 .fig svg, .r2 .fig svg { margin-left: 22px; }
td.pick { background: #aeebd8; }
.hscroll { height: 18px; flex: none; display: flex; align-items: center; gap: 5px; padding: 0 6px 2px; background: #f0f0f0; border: 1px solid #a0a0a0; border-top: 0; }
.track { flex: 1; height: 15px; display: flex; }
.hthumb { width: 72%; background: #cdcdcd; }

/* status bar */
.status { display: flex; gap: 2px; height: 22px; padding-top: 2px; background: #f0f0f0; flex: none; }
.status span { border: 1px solid #c8c8c8; padding-left: 1px; line-height: 18px; height: 20px; background: #f8f8f8; white-space: nowrap; }
.s1 { width: 148px; } .s2 { width: 78px; } .s3 { width: 98px; } .s4 { width: 48px; } .s5 { flex: 1; } .s6 { width: 70px; }

/* taskbar */
.taskbar { display: flex; height: 40px; background: #000; color: #fff; flex: none; }
.start { width: 48px; display: flex; align-items: center; justify-content: center; }
.search { width: 344px; background: #333; display: flex; align-items: center; padding: 0 15px 0 9px; gap: 5px; margin-right: 2px; }
.search input { flex: 1; min-width: 0; font-size: 14px; }
.search input::placeholder { color: #999; opacity: 1; }
.apps { display: flex; }
.apps button { width: 49px; display: flex; align-items: center; justify-content: center; }
.tsep { width: 5px; height: 16px; margin: 12px 10px; border: solid #444; border-width: 0 1px; }
.run { background: linear-gradient(#76b9ed, #76b9ed) center bottom / 40px 2px no-repeat; }
.run.cur { background: linear-gradient(#76b9ed, #76b9ed) center bottom / 100% 2px no-repeat #333; }
.cpu, .clock { display: flex; flex-direction: column; justify-content: center; text-align: center; line-height: 18px; }
.cpu { margin-left: auto; margin-right: 19px; }
.tray { display: flex; align-items: center; gap: 8px; }
.zh { font-size: 14px; }
.clock { margin-left: 17px; width: 62px; }
.notes { display: flex; align-items: center; margin-left: 17px; }
.notes text { fill: #fff; font-size: 12px; font-weight: 700; text-anchor: middle; }
.peek { border-left: 1px solid #555; width: 5px; margin-left: 12px; }
```
